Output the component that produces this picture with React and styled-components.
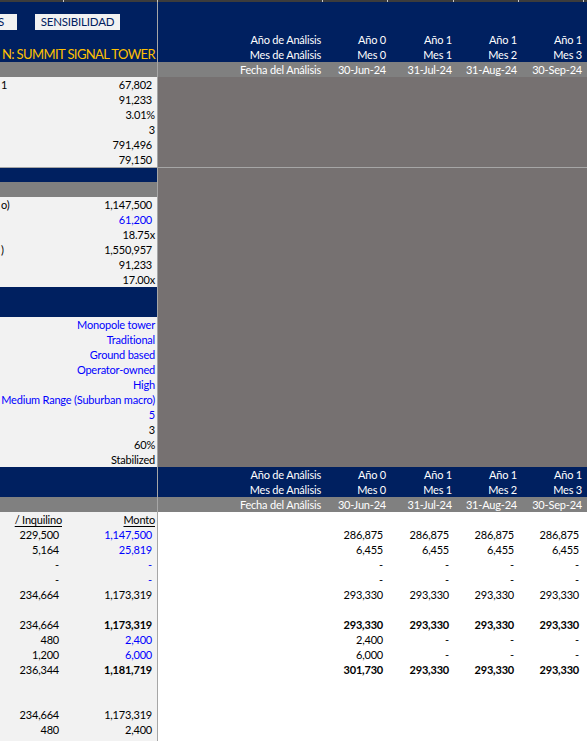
import React from "react";
import styled, { createGlobalStyle } from "styled-components";

const NAVY = "#002060";
const GREY = "#808080";
const SLATE = "#767171";
const PAPER = "#f2f2f2";
const BLUE = "#0000ff";
const COLS = "165px 65px 66px 65px 65px 1fr";

const GlobalStyle = createGlobalStyle`
  html, body {
    margin: 0;
    padding: 0;
    background: #fff;
  }
  body {
    font-family: Lato, "Open Sans", sans-serif;
    font-size: 11px;
    letter-spacing: -0.2px;
    color: #000;
  }
`;

const Sheet = styled.div`
  width: 587px;
  height: 741px;
  overflow: hidden;
`;

const Strip = styled.div`
  display: flex;
  height: 2px;
  background: #3c3c3c;
`;

const Tick = styled.span`
  flex: 0 0 ${(p) => p.$w}px;
  box-sizing: border-box;
  border-right: 1px solid #c8c8c8;
`;

const Row = styled.div`
  display: flex;
  height: ${(p) => p.$h || 15}px;
  box-sizing: border-box;
  line-height: 14px;
  ${(p) => p.$rule && "border-top: 1px solid #a6a6a6;"}
`;

const Left = styled.div`
  flex: 0 0 158px;
  box-sizing: border-box;
  border-right: 1px solid #a6a6a6;
  background: ${(p) => p.$bg};
  display: flex;
  align-items: center;
  overflow: hidden;
`;

const LeftSplit = styled(Left)`
  display: grid;
  grid-template-columns: 64px 1fr;
`;

const Right = styled.div`
  flex: 1;
  display: grid;
  grid-template-columns: ${COLS};
  align-items: center;
  background: ${(p) => p.$bg || "transparent"};
`;

const Cell = styled.div`
  text-align: right;
  white-space: nowrap;
  overflow: hidden;
  padding-right: ${(p) => (p.$num ? 5 : 2)}px;
  color: ${(p) => p.$color || "inherit"};
  font-weight: ${(p) => (p.$bold ? 700 : 400)};
  text-decoration: ${(p) => (p.$under ? "underline" : "none")};
  text-underline-offset: 2px;
`;

const Clip = styled.span`
  white-space: nowrap;
  padding-left: 1px;
`;

const Value = styled(Cell)`
  margin-left: auto;
  overflow: visible;
`;

/* navy banner with the sheet buttons and the title */
const BannerLeft = styled(Left)`
  flex-direction: column;
  align-items: stretch;
`;

const ButtonBar = styled.div`
  display: flex;
  gap: 18px;
  margin-top: 12px;
`;

const SheetButton = styled.div`
  flex: 0 0 ${(p) => p.$w}px;
  height: 16px;
  display: flex;
  align-items: center;
  justify-content: ${(p) => (p.$clip ? "flex-end" : "center")};
  padding-right: ${(p) => (p.$clip ? 13 : 0)}px;
  box-sizing: border-box;
  overflow: hidden;
  background: ${PAPER};
  color: ${NAVY};
  font-size: 11.5px;
  letter-spacing: -0.2px;
`;

const Title = styled.div`
  margin-top: auto;
  height: 15px;
  line-height: 15px;
  text-align: right;
  padding-right: 2px;
  white-space: nowrap;
  color: #ffc000;
  font-size: 13px;
  letter-spacing: -0.6px;
`;

const BannerRight = styled.div`
  flex: 1;
  display: flex;
  flex-direction: column;
  justify-content: flex-end;
  background: ${NAVY};
  color: #fff;
`;

const HeadLine = styled(Right)`
  flex: none;
  height: 15px;
`;

const periods = [
  ["Año 0", "Mes 0", "30-Jun-24"],
  ["Año 1", "Mes 1", "31-Jul-24"],
  ["Año 1", "Mes 2", "31-Aug-24"],
  ["Año 1", "Mes 3", "30-Sep-24"],
];

const block1 = [
  { clip: "1", value: "67,802", num: true },
  { value: "91,233", num: true },
  { value: "3.01%" },
  { value: "3" },
  { value: "791,496", num: true },
  { value: "79,150", num: true },
];

const block2 = [
  { clip: "o)", value: "1,147,500", num: true },
  { value: "61,200", num: true, blue: true },
  { value: "18.75x" },
  { clip: ")", value: "1,550,957", num: true },
  { value: "91,233", num: true },
  { value: "17.00x" },
];

const block3 = [
  { value: "Monopole tower", blue: true },
  { value: "Traditional", blue: true },
  { value: "Ground based", blue: true },
  { value: "Operator-owned", blue: true },
  { value: "High", blue: true },
  { value: "Medium Range (Suburban macro)", blue: true },
  { value: "5", blue: true },
  { value: "3" },
  { value: "60%" },
  { value: "Stabilized" },
];

const dash4 = ["-", "-", "-", "-"];

const ledger = [
  { a: "229,500", b: "1,147,500", blue: true, cols: Array(4).fill("286,875") },
  { a: "5,164", b: "25,819", blue: true, cols: Array(4).fill("6,455") },
  { a: "-", b: "-", blue: true, cols: dash4 },
  { a: "-", b: "-", blue: true, cols: dash4 },
  { a: "234,664", b: "1,173,319", cols: Array(4).fill("293,330") },
  {},
  { a: "234,664", b: "1,173,319", boldB: true, bold: true, cols: Array(4).fill("293,330") },
  { a: "480", b: "2,400", blue: true, cols: ["2,400", "-", "-", "-"] },
  { a: "1,200", b: "6,000", blue: true, cols: ["6,000", "-", "-", "-"] },
  { a: "236,344", b: "1,181,719", boldB: true, bold: true, cols: ["301,730", "293,330", "293,330", "293,330"] },
  {},
  {},
  { a: "234,664", b: "1,173,319" },
  { a: "480", b: "2,400" },
  {},
];

function PeriodHeader() {
  return (
    <>
      <HeadLine>
        <Cell>Año de Análisis</Cell>
        {periods.map((p, i) => (
          <Cell key={i}>{p[0]}</Cell>
        ))}
      </HeadLine>
      <HeadLine>
        <Cell>Mes de Análisis</Cell>
        {periods.map((p, i) => (
          <Cell key={i}>{p[1]}</Cell>
        ))}
      </HeadLine>
    </>
  );
}

function DateRow() {
  return (
    <Row>
      <Left $bg={GREY} />
      <Right $bg={GREY} style={{ color: "#fff" }}>
        <Cell>Fecha del Análisis</Cell>
        {periods.map((p, i) => (
          <Cell key={i}>{p[2]}</Cell>
        ))}
      </Right>
    </Row>
  );
}

function InputBlock({ rows }) {
  return rows.map((r, i) => (
    <Row key={i}>
      <Left $bg={PAPER}>
        {r.clip && <Clip>{r.clip}</Clip>}
        <Value $num={r.num} $color={r.blue ? BLUE : undefined}>
          {r.value}
        </Value>
      </Left>
      <Right $bg={SLATE} />
    </Row>
  ));
}

function App() {
  return (
    <Sheet>
      <GlobalStyle />
      <Strip>
        {[64, 94, 165, 65, 66, 65, 65].map((w, i) => (
          <Tick key={i} $w={w} />
        ))}
      </Strip>

      <Row $h={60}>
        <BannerLeft $bg={NAVY}>
          <ButtonBar>
            <SheetButton $w={17} $clip>
              S
            </SheetButton>
            <SheetButton $w={85}>SENSIBILIDAD</SheetButton>
          </ButtonBar>
          <Title>N: SUMMIT SIGNAL TOWER</Title>
        </BannerLeft>
        <BannerRight>
          <PeriodHeader />
        </BannerRight>
      </Row>
      <DateRow />

      <InputBlock rows={block1} />

      <Row $rule>
        <Left $bg={NAVY} />
        <Right $bg={SLATE} />
      </Row>
      <Row>
        <Left $bg={GREY} />
        <Right $bg={SLATE} />
      </Row>

      <InputBlock rows={block2} />

      <Row $h={30}>
        <Left $bg={NAVY} />
        <Right $bg={SLATE} />
      </Row>

      <InputBlock rows={block3} />

      <Row $h={30}>
        <Left $bg={NAVY} />
        <BannerRight>
          <PeriodHeader />
        </BannerRight>
      </Row>
      <DateRow />

      <Row>
        <LeftSplit $bg={PAPER}>
          <Cell $under>/ Inquilino</Cell>
          <Cell $under>Monto</Cell>
        </LeftSplit>
        <Right $bg="#fff" />
      </Row>
      {ledger.map((r, i) => (
        <Row key={i}>
          <LeftSplit $bg={PAPER}>
            <Cell $num>{r.a}</Cell>
            <Cell $num $bold={r.boldB} $color={r.blue ? BLUE : undefined}>
              {r.b}
            </Cell>
          </LeftSplit>
          <Right $bg="#fff">
            <Cell />
            {(r.cols || []).map((v, j) => (
              <Cell key={j} $num $bold={r.bold}>
                {v}
              </Cell>
            ))}
          </Right>
        </Row>
      ))}
    </Sheet>
  );
}

export default App;
